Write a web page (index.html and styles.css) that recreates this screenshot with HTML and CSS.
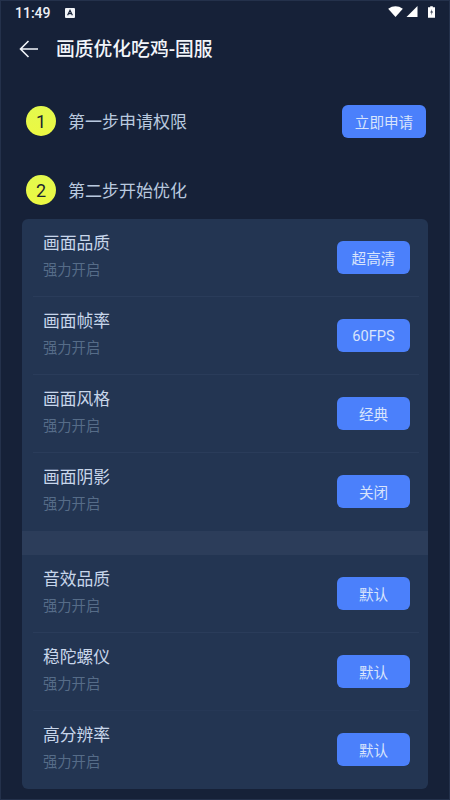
FILE: index.html
```html
<!DOCTYPE html>
<html lang="zh">
<head>
<meta charset="utf-8">
<title>画质优化吃鸡-国服</title>
<link rel="stylesheet" href="styles.css">
</head>
<body>
<div class="screen">
  <div class="status">
    <div class="status-left">
      <span class="time">11:49</span>
      <svg class="a-icon" width="10" height="10" viewBox="0 0 10 10"><rect width="10" height="10" rx="1" fill="#f2f4f8"/><path d="M2.6 7.2 5 2.4l2.4 4.8M3.5 5.7h3" stroke="#162138" stroke-width="1.2" fill="none"/></svg>
    </div>
    <div class="status-right">
      <svg width="15" height="11" viewBox="0 0 16 12"><path d="M0 3Q8-2.4 16 3L8 12Z" fill="#fff"/></svg>
      <svg width="12" height="11" viewBox="0 0 12 12"><path d="M12 0V12H0Z" fill="#fff"/></svg>
      <svg class="battery" width="7" height="12" viewBox="0 0 8 13"><path d="M2.5 0h3v1H8v12H0V1h2.5Z" fill="#fff"/><path d="M4.6 3 2.6 7.2h1.6L3.5 10.4 5.6 6H4Z" fill="#162138"/></svg>
    </div>
  </div>
  <header class="appbar">
    <svg class="back" width="20" height="18" viewBox="0 0 20 18"><path d="M19 9H2M9.5 1 1.5 9l8 8" stroke="#f2f5fa" stroke-width="1.6" fill="none"/></svg>
    <h1 class="title">画质优化吃鸡-国服</h1>
  </header>
  <section class="step step-one">
    <span class="num">1</span>
    <span class="step-text">第一步申请权限</span>
    <button class="btn btn-apply">立即申请</button>
  </section>
  <section class="step step-two">
    <span class="num">2</span>
    <span class="step-text">第二步开始优化</span>
  </section>
  <div class="card">
    <div class="row"><div class="info"><div class="name">画面品质</div><div class="sub">强力开启</div></div><button class="btn">超高清</button></div>
    <div class="row"><div class="info"><div class="name">画面帧率</div><div class="sub">强力开启</div></div><button class="btn">60FPS</button></div>
    <div class="row"><div class="info"><div class="name">画面风格</div><div class="sub">强力开启</div></div><button class="btn">经典</button></div>
    <div class="row last"><div class="info"><div class="name">画面阴影</div><div class="sub">强力开启</div></div><button class="btn">关闭</button></div>
    <div class="band"></div>
    <div class="row"><div class="info"><div class="name">音效品质</div><div class="sub">强力开启</div></div><button class="btn">默认</button></div>
    <div class="row faint"><div class="info"><div class="name">稳陀螺仪</div><div class="sub">强力开启</div></div><button class="btn">默认</button></div>
    <div class="row last"><div class="info"><div class="name">高分辨率</div><div class="sub">强力开启</div></div><button class="btn">默认</button></div>
  </div>
</div>
</body>
</html>
```
FILE: styles.css
```css
* { box-sizing: border-box; margin: 0; padding: 0; }
html, body { width: 450px; height: 800px; overflow: hidden; background: #162138; }
body { font-family: Roboto, "Noto Sans CJK SC", sans-serif; }
.screen { width: 450px; height: 800px; display: flex; flex-direction: column; background: #162138; box-shadow: inset 0 0 0 1px #24314b; }
.status { height: 25px; display: flex; justify-content: space-between; align-items: center; padding: 0 15px 0 15px; }
.status-left { display: flex; align-items: center; gap: 14px; }
.time { font-size: 14px; font-weight: 500; color: #eef1f6; }
.status-right { display: flex; align-items: center; gap: 3px; margin-top: -2px; }
.battery { margin-left: 7px; }
.appbar { height: 48px; display: flex; align-items: center; padding-left: 19px; }
.back { margin-right: 17px; }
.title { font-size: 18.8px; font-weight: 500; color: #f2f5fa; margin-top: -3px; }
.step { display: flex; align-items: center; padding: 0 24px 0 26px; height: 34px; }
.step-one { margin-top: 31px; }
.step-two { margin-top: 35px; margin-bottom: 12px; }
.num { width: 30px; height: 30px; border-radius: 50%; background: linear-gradient(180deg, #e3f94e, #ecf842); color: #1b2530; font-size: 18px; display: flex; align-items: center; justify-content: center; margin-right: 13px; flex-shrink: 0; }
.step-text { font-size: 17px; color: #b9c9df; flex: 1; margin: -2px 0 0 -1px; }
.btn { width: 73px; height: 33px; border: 0; border-radius: 6px; background: #4b80fb; color: #d8e4fb; font-family: inherit; font-size: 14.6px; flex-shrink: 0; }
.btn-apply { width: 84px; margin-top: 1px; }
.card { width: 406px; height: 570px; margin-left: 22px; background: #233552; border-radius: 6px; overflow: hidden; }
.row { height: 78px; margin: 0 9px 0 11px; display: flex; align-items: center; justify-content: space-between; padding: 0 9px 0 10px; border-bottom: 1px solid #2a3c5a; }
.row.faint { border-bottom-color: #263856; }
.row.last { border-bottom: 1px solid transparent; }
.info { display: flex; flex-direction: column; gap: 5px; margin-top: -4px; }
.name { font-size: 16.8px; line-height: 24px; color: #c8d6ea; }
.sub { font-size: 14.3px; line-height: 20px; color: #566c88; }
.band { height: 24px; background: #2c3d5a; }
```
